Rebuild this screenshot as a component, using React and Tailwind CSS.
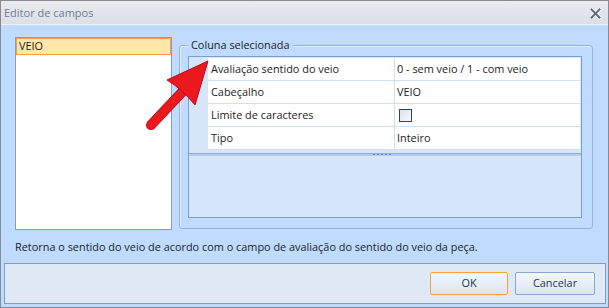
import { useState } from "react";

const rows = [
  { name: "Avaliação sentido do veio", value: "0 - sem veio / 1 - com veio" },
  { name: "Cabeçalho", value: "VEIO" },
  { name: "Limite de caracteres", check: true },
  { name: "Tipo", value: "Inteiro" },
];

function CloseIcon() {
  return (
    <svg width="11" height="11" viewBox="0 0 11 11">
      <path d="M1.5 1.5 L9.5 9.5 M9.5 1.5 L1.5 9.5" stroke="#ffffff" strokeWidth="3.4" strokeLinecap="square" />
      <path d="M1.5 1.5 L9.5 9.5 M9.5 1.5 L1.5 9.5" stroke="#5e6e84" strokeWidth="2" strokeLinecap="square" />
    </svg>
  );
}

function Arrow() {
  return (
    <svg className="absolute left-[140px] top-[52px] pointer-events-none" width="75" height="82" viewBox="0 0 75 82">
      <path d="M10 72 L44 36" stroke="#b50d12" strokeWidth="10" strokeLinecap="round" />
      <path d="M10 72 L44 36" stroke="#ec1820" strokeWidth="8.5" strokeLinecap="round" />
      <path d="M67 8 L26 27 Q41 36 54 52 Z" fill="#ec1820" stroke="#b50d12" strokeWidth="1" strokeLinejoin="round" />
    </svg>
  );
}

export default function App() {
  const [selected] = useState("VEIO");

  return (
    <div className="relative w-[609px] h-[308px] border border-[#858b93] bg-[#bfdbff] flex flex-col font-['Open_Sans',sans-serif] text-[10.9px] text-[#1b1b1b] overflow-hidden">
      <div className="h-[24px] flex items-center justify-between pl-[3px] pr-[7px] pt-[1px] bg-gradient-to-b from-[#e8ebef] to-[#dbe0e7] border-b border-[#eef1f5]">
        <span className="text-[#6d7d93] text-[11px]">Editor de campos</span>
        <CloseIcon />
      </div>

      <div className="pl-[14px] pt-[12px]">
        <div className="flex">
          <div className="w-[157px] h-[193px] border border-[#7d9ecb] bg-white">
            <div className="h-[17px] flex items-center pl-[2px] border border-[#f2a04e] bg-[#ffe6a9]">{selected}</div>
          </div>

          <div className="relative ml-[7px] mt-[8px] w-[414px] h-[184px] border border-[#92b3df] rounded-[3px] shadow-[inset_1px_1px_0_#e4eefb] pl-[8px] pt-[10px]">
            <span className="absolute left-[8px] -top-[9px] px-[3px] bg-[#bfdbff] leading-[16px]">Coluna selecionada</span>

            <div className="w-[394px] h-[162px] border border-[#7a9fcf] bg-[#d6e5f8] flex flex-col">
              <div className="mt-[1px]">
                {rows.map((r) => (
                  <div key={r.name} className="flex h-[23px]">
                    <div className="w-[19px]" />
                    <div className="w-[186px] flex items-center pl-[3px] bg-white border-b border-[#cfdef1]">{r.name}</div>
                    <div className="w-[186px] flex items-center pl-[2px] bg-white border-b border-l border-[#cfdef1]">
                      {r.check ? (
                        <span className="ml-[2px] w-[13px] h-[13px] border border-[#22436c] bg-gradient-to-br from-[#dae2ec] to-[#f6f8fb]" />
                      ) : (
                        r.value
                      )}
                    </div>
                  </div>
                ))}
              </div>
              <div className="h-[3px]" />
              <div className="h-[3px] border-t border-[#8eafdc] bg-[#b4cbea] flex justify-center">
                <div className="w-[19px] h-[1px] bg-[repeating-linear-gradient(90deg,#5f87bd_0_2px,transparent_2px_4px)] ml-[-5px]" />
              </div>
              <div className="flex-1 bg-[#d5e5fa]" />
            </div>
          </div>
        </div>

        <p className="mt-[9px] leading-[15px]">Retorna o sentido do veio de acordo com o campo de avaliação do sentido do veio da peça.</p>
      </div>

      <div className="mt-auto mb-[3px] ml-[3px] mr-[2px] h-[41px] border border-[#7c9cc8] bg-[#dfe9f5] flex items-center justify-end gap-[7px] pr-[10px]">
        <button className="w-[78px] h-[23px] rounded-[2px] border border-[#f0a53f] bg-gradient-to-b from-[#f4f7fb] to-[#dbe5f2] text-[#1f3550]">OK</button>
        <button className="w-[80px] h-[23px] rounded-[2px] border border-[#8aa6cc] bg-gradient-to-b from-[#f4f7fb] to-[#dbe5f2] text-[#1f3550]">Cancelar</button>
      </div>

      <Arrow />
    </div>
  );
}
